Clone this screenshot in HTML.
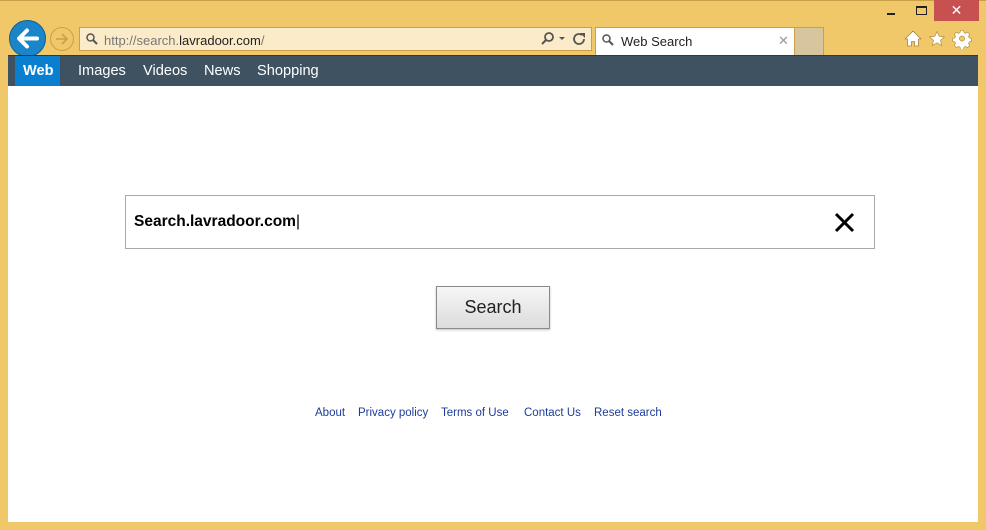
<!DOCTYPE html>
<html><head><meta charset="utf-8"><style>
*{margin:0;padding:0;box-sizing:border-box}
body{width:986px;height:530px;background:#f0c86a;position:relative;overflow:hidden;font-family:"Liberation Sans",Arial,sans-serif}
.abs{position:absolute}
.content{left:8px;top:86px;width:970px;height:436px;background:#fff}
.nav{left:8px;top:55px;width:970px;height:31px;background:#3f5262;border-top:1px solid #2c3a46}
.nav span{position:absolute;top:7px;color:#fff;font-size:14.6px}
.web{left:7px;top:0;width:45px;height:30px;background:#0a7fd0}
.addr{left:79px;top:27px;width:513px;height:24px;background:#fbebc8;border:1px solid #c9a04a}
.tab{left:595px;top:27px;width:200px;height:28px;background:#fff;border:1px solid #c9a04a;border-bottom:none}
.tan{left:795px;top:27px;width:29px;height:28px;background:#d6c59d;border:1px solid #c9a04a;border-left:none;border-bottom:none}
.sbox{left:125px;top:195px;width:750px;height:54px;border:1px solid #a9a9a9;background:#fff}
.btn{left:436px;top:286px;width:114px;height:43px;border:1px solid #8a8a8a;background:linear-gradient(#f6f6f6,#dcdcdc);box-shadow:0 1px 2px rgba(0,0,0,.25);font-size:18px;color:#222;text-align:center;line-height:41px}
.links{top:407px;font-size:11.5px;color:#1c3c9a}
</style></head><body>
<div class="abs" style="left:0;top:0;width:986px;height:1px;background:#c9a04a"></div>
<div class="abs" style="left:887px;top:13px;width:8px;height:2px;background:#222"></div>
<div class="abs" style="left:916px;top:6px;width:11px;height:9px;border:1px solid #222;border-top-width:2px"></div>
<div class="abs" style="left:934px;top:0;width:45px;height:21px;background:#c75050;color:#fff;font-size:14px;text-align:center;line-height:21px">✕</div>
<div class="abs" style="left:9px;top:20px;width:37px;height:37px;border-radius:50%;background:#1a85c8;border:1px solid #0f5f96"></div>
<svg class="abs" style="left:9px;top:20px" width="37" height="37"><path d="M28 18.5H11M18 10.5L10 18.5L18 26.5" stroke="#fff" stroke-width="4" fill="none" stroke-linecap="round" stroke-linejoin="round"/></svg>
<div class="abs" style="left:50px;top:27px;width:24px;height:24px;border-radius:50%;border:1px solid #c9a04a"></div>
<svg class="abs" style="left:50px;top:27px" width="24" height="24"><path d="M6 12H17M12 7L17 12L12 17" stroke="#c9a04a" stroke-width="1.6" fill="none"/></svg>
<div class="abs addr"></div>
<svg class="abs" style="left:85px;top:32px" width="14" height="14"><circle cx="5.5" cy="5.5" r="3.5" stroke="#555" stroke-width="1.5" fill="none"/><path d="M8 8L12 12" stroke="#555" stroke-width="2"/></svg>
<div class="abs" style="left:104px;top:33px;font-size:13px;color:#777">http://search.<span style="color:#222">lavradoor.com</span>/</div>
<svg class="abs" style="left:540px;top:31px" width="50" height="16"><circle cx="9" cy="6" r="4" stroke="#555" stroke-width="1.8" fill="none"/><path d="M6 9L2 13" stroke="#555" stroke-width="2"/><path d="M19 6h6l-3 3z" fill="#555"/><path d="M42 4a5 5 0 1 0 2 4" stroke="#555" stroke-width="1.8" fill="none"/><path d="M40 2h5v5z" fill="#555"/></svg>
<div class="abs tab"></div>
<svg class="abs" style="left:601px;top:33px" width="14" height="14"><circle cx="5.5" cy="5.5" r="3.5" stroke="#555" stroke-width="1.5" fill="none"/><path d="M8 8L12 12" stroke="#555" stroke-width="2"/></svg>
<div class="abs" style="left:621px;top:34px;font-size:13px;color:#222">Web Search</div>
<div class="abs" style="left:778px;top:33px;font-size:13px;color:#999">✕</div>
<div class="abs tan"></div>
<svg class="abs" style="left:903px;top:29px" width="70" height="20">
<path d="M10 2L2 10H4.5V17H8.5V12.5H11.5V17H15.5V10H18Z" fill="#fff" stroke="#a88436" stroke-width=".8" stroke-linejoin="round"/>
<path d="M34 2.5l2.2 4.8 5.2.6-3.9 3.5 1.1 5.1-4.6-2.6-4.6 2.6 1.1-5.1-3.9-3.5 5.2-.6z" fill="#fff" stroke="#a88436" stroke-width=".6"/>
<g transform="translate(59,9.5)" fill="#fff" stroke="#a88436" stroke-width=".6">
<path d="M-1.5,-8h3l.5,2.2 1.6.7 2-1.2 2.1,2.1-1.2,2 .7,1.6 2.2.5v3l-2.2.5-.7,1.6 1.2,2-2.1,2.1-2-1.2-1.6.7-.5,2.2h-3l-.5-2.2-1.6-.7-2,1.2-2.1-2.1 1.2-2-.7-1.6-2.2-.5v-3l2.2-.5.7-1.6-1.2-2 2.1-2.1 2,1.2 1.6-.7z"/>
<circle r="2.6" fill="#f0c86a"/></g></svg>
<div class="abs content"></div>
<div class="abs nav">
<div class="abs web"></div>
<span style="left:15px;font-weight:bold">Web</span>
<span style="left:70px">Images</span>
<span style="left:135px">Videos</span>
<span style="left:196px">News</span>
<span style="left:249px">Shopping</span>
</div>
<div class="abs sbox"></div>
<div class="abs" style="left:134px;top:213px;font-size:15.5px;font-weight:bold;color:#000">Search.lavradoor.com<span style="font-weight:normal">|</span></div>
<svg class="abs" style="left:834px;top:212px" width="21" height="21"><path d="M2 2L19 19M19 2L2 19" stroke="#000" stroke-width="3"/></svg>
<div class="abs btn">Search</div>
<span class="abs links" style="left:315px">About</span>
<span class="abs links" style="left:358px">Privacy policy</span>
<span class="abs links" style="left:441px">Terms of Use</span>
<span class="abs links" style="left:524px">Contact Us</span>
<span class="abs links" style="left:594px">Reset search</span>
</body></html>
